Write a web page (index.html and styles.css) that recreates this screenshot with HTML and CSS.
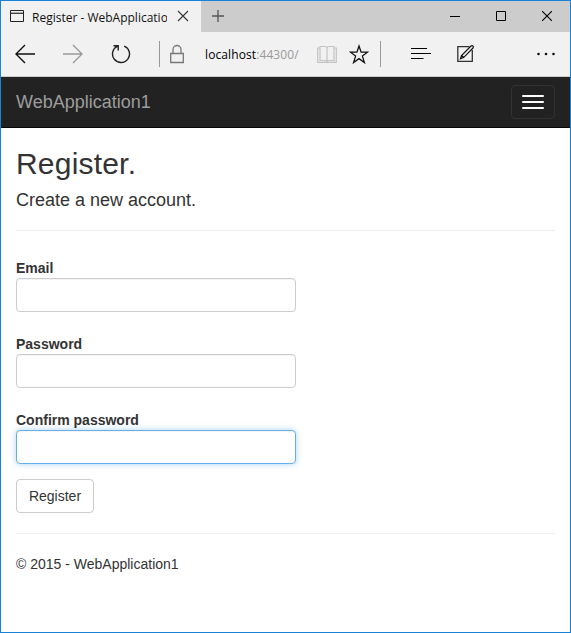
FILE: index.html
```html
<!DOCTYPE html>
<html lang="en">
<head>
<meta charset="utf-8">
<title>Register - WebApplication1</title>
<link rel="stylesheet" href="styles.css">
</head>
<body>
<div class="window">
  <div class="tabs">
    <div class="tab">
      <svg class="page-icon" width="14" height="12" viewBox="0 0 14 12"><path d="M.5.5h13v11H.5z" fill="none" stroke="#222"/><path d="M1 2.5h12" stroke="#aaa"/><path d="M1 3.5h12" stroke="#444"/></svg>
      <span class="tab-title">Register - WebApplication1</span>
      <svg class="tab-close" width="12" height="12" viewBox="0 0 12 12"><path d="M1 1l10 10M11 1L1 11" stroke="#333" stroke-width="1.1"/></svg>
    </div>
    <svg class="new-tab" width="12" height="12" viewBox="0 0 12 12"><path d="M6 0v12M0 6h12" stroke="#555" stroke-width="1.3"/></svg>
    <div class="controls">
      <svg width="10" height="10" viewBox="0 0 10 10"><path d="M0 5.5h10" stroke="#000"/></svg>
      <svg width="10" height="10" viewBox="0 0 10 10"><path d="M.5.5h9v9h-9z" fill="none" stroke="#000"/></svg>
      <svg width="10" height="10" viewBox="0 0 10 10"><path d="M0 0l10 10M10 0L0 10" stroke="#000" stroke-width="1.1"/></svg>
    </div>
  </div>
  <div class="toolbar">
    <svg class="back" width="20" height="24" viewBox="0 0 20 24"><path d="M10 3L1 12l9 9M1 12h19" fill="none" stroke="#111" stroke-width="1.4"/></svg>
    <svg class="forward" width="20" height="24" viewBox="0 0 20 24"><path d="M10 3l9 9-9 9M19 12H0" fill="none" stroke="#999" stroke-width="1.4"/></svg>
    <svg class="reload" width="20" height="24" viewBox="0 0 20 24"><path d="M13.2 4.1A8.5 8.5 0 1 1 6.6 4.2M2.5 3.7h4.7v4.7" fill="none" stroke="#222" stroke-width="1.4"/></svg>
    <span class="divider"></span>
    <svg class="lock" width="14" height="24" viewBox="0 0 14 24"><path d="M.7 11.5h12.6v9H.7zM3 11V7.5a4 4 0 0 1 8 0V11" fill="none" stroke="#777" stroke-width="1.3"/></svg>
    <div class="address">localhost<span class="port">:44300/</span></div>
    <svg class="book" width="20" height="24" viewBox="0 0 20 24"><path d="M3 4.5h5q2 0 2 2 0-2 2-2h5v14h-5q-2 0-2 1.5 0-1.5-2-1.5H3zM10 6v14M3 6H.7v14.4h18.6V6H17" fill="none" stroke="#c3c3c3" stroke-width="1.2"/></svg>
    <svg class="star" width="20" height="24" viewBox="0 0 20 24"><path d="M10 4l2.1 6.2h6.4l-5.1 3.9 2 6.4L10 16.6l-5.4 3.9 2-6.4-5.1-3.9h6.4z" fill="none" stroke="#111" stroke-width="1.3"/></svg>
    <span class="divider divider-end"></span>
    <svg class="hub" width="20" height="24" viewBox="0 0 20 24"><path d="M0 6.5h16M0 11.5h20M0 16.5h12.5" stroke="#000"/></svg>
    <svg class="note" width="18" height="24" viewBox="0 0 18 24"><path d="M12.5 4.7H.8v14.6h14.5V8" fill="none" stroke="#333" stroke-width="1.3"/><path d="M3.5 16.7l1-3.2L14 4q1.2-.8 2 .1t0 1.9l-9.4 9.6zM4.7 13.5l2 2" fill="none" stroke="#111" stroke-width="1.2"/></svg>
    <svg class="more" width="19" height="24" viewBox="0 0 19 24"><g fill="#111"><circle cx="1.5" cy="12" r="1.3"/><circle cx="9" cy="12" r="1.3"/><circle cx="16.5" cy="12" r="1.3"/></g></svg>
  </div>
  <nav class="navbar">
    <a class="brand">WebApplication1</a>
    <div class="menu-button"><span></span><span></span><span></span></div>
  </nav>
  <main class="content">
    <h2>Register.</h2>
    <h4>Create a new account.</h4>
    <hr>
    <form>
      <div class="field"><label for="email">Email</label><input id="email" type="text"></div>
      <div class="field"><label for="password">Password</label><input id="password" type="password"></div>
      <div class="field"><label for="confirm">Confirm password</label><input id="confirm" class="active" type="password"></div>
      <button type="button">Register</button>
    </form>
    <hr>
    <footer>© 2015 - WebApplication1</footer>
  </main>
</div>
</body>
</html>
```
FILE: styles.css
```css
* { box-sizing: border-box; }
body { margin: 0; font: 14px/20px "Liberation Sans", Arial, sans-serif; color: #333; }
svg { display: block; flex: none; }
.window { height: 633px; border: 1px solid #1a82d6; background: #fff; overflow: hidden; }
.tabs { display: flex; height: 31px; background: #ccc; }
.tab { display: flex; width: 200px; padding-left: 9px; background: #f1f1f1; font: 12px/16px "Open Sans", sans-serif; color: #111; }
.page-icon { margin-top: 9px; }
.tab-title { width: 135px; margin: 9px 0 0 8px; overflow: hidden; white-space: nowrap; }
.tab-close { margin: 9px 0 0 10px; }
.new-tab { margin: 9px 0 0 11px; }
.controls { display: flex; gap: 36px; margin: 10px 18px 0 auto; }
.toolbar { display: flex; align-items: center; height: 45px; border-bottom: 1px solid #ccc; background: #f1f1f1; }
.back { margin-left: 14px; }
.forward, .reload { margin-left: 28px; }
.divider { width: 1px; height: 26px; margin-left: 28px; background: #999; }
.lock { margin-left: 10px; }
.address { width: 112px; margin-left: 21px; padding-top: 2px; font: 12px/16px "Open Sans", sans-serif; letter-spacing: .1px; color: #000; white-space: nowrap; }
.port { color: #999; }
.book { flex: none; }
.star { margin-left: 12px; }
.divider-end { margin-left: 11px; }
.hub { margin-left: 30px; }
.note { margin-left: 26px; }
.more { margin-left: 62px; }
.navbar { display: flex; justify-content: space-between; height: 51px; padding: 8px 15px 0; border-bottom: 1px solid #080808; background: #222; }
.brand { padding-top: 7px; font-size: 18px; color: #9d9d9d; }
.menu-button { display: flex; flex-direction: column; gap: 4px; width: 44px; height: 34px; padding: 9px 10px; border: 1px solid #333; border-radius: 4px; }
.menu-button span { flex: none; height: 2px; border-radius: 1px; background: #fff; }
.content { padding: 19px 15px; }
h2 { margin: 0 0 10px; font-size: 30px; line-height: 33px; font-weight: 400; letter-spacing: .2px; }
h4 { margin: 0; font-size: 18px; line-height: 20px; font-weight: 400; }
hr { height: 1px; margin: 20px 0; border: 0; background: #eee; }
.field { width: 280px; padding-top: 7px; margin-bottom: 15px; }
label { display: block; font-weight: 700; }
input { display: block; width: 280px; height: 34px; padding: 6px 12px; border: 1px solid #ccc; border-radius: 4px; background: #fff; box-shadow: inset 0 1px 1px rgba(0,0,0,.05); outline: 0; }
.active { border-color: #66afe9; box-shadow: inset 0 1px 1px rgba(0,0,0,.05), 0 0 6px rgba(102,175,233,.55); }
button { display: block; width: 78px; height: 34px; padding: 0; border: 1px solid #ccc; border-radius: 4px; background: #fff; font: inherit; color: #333; }
```
